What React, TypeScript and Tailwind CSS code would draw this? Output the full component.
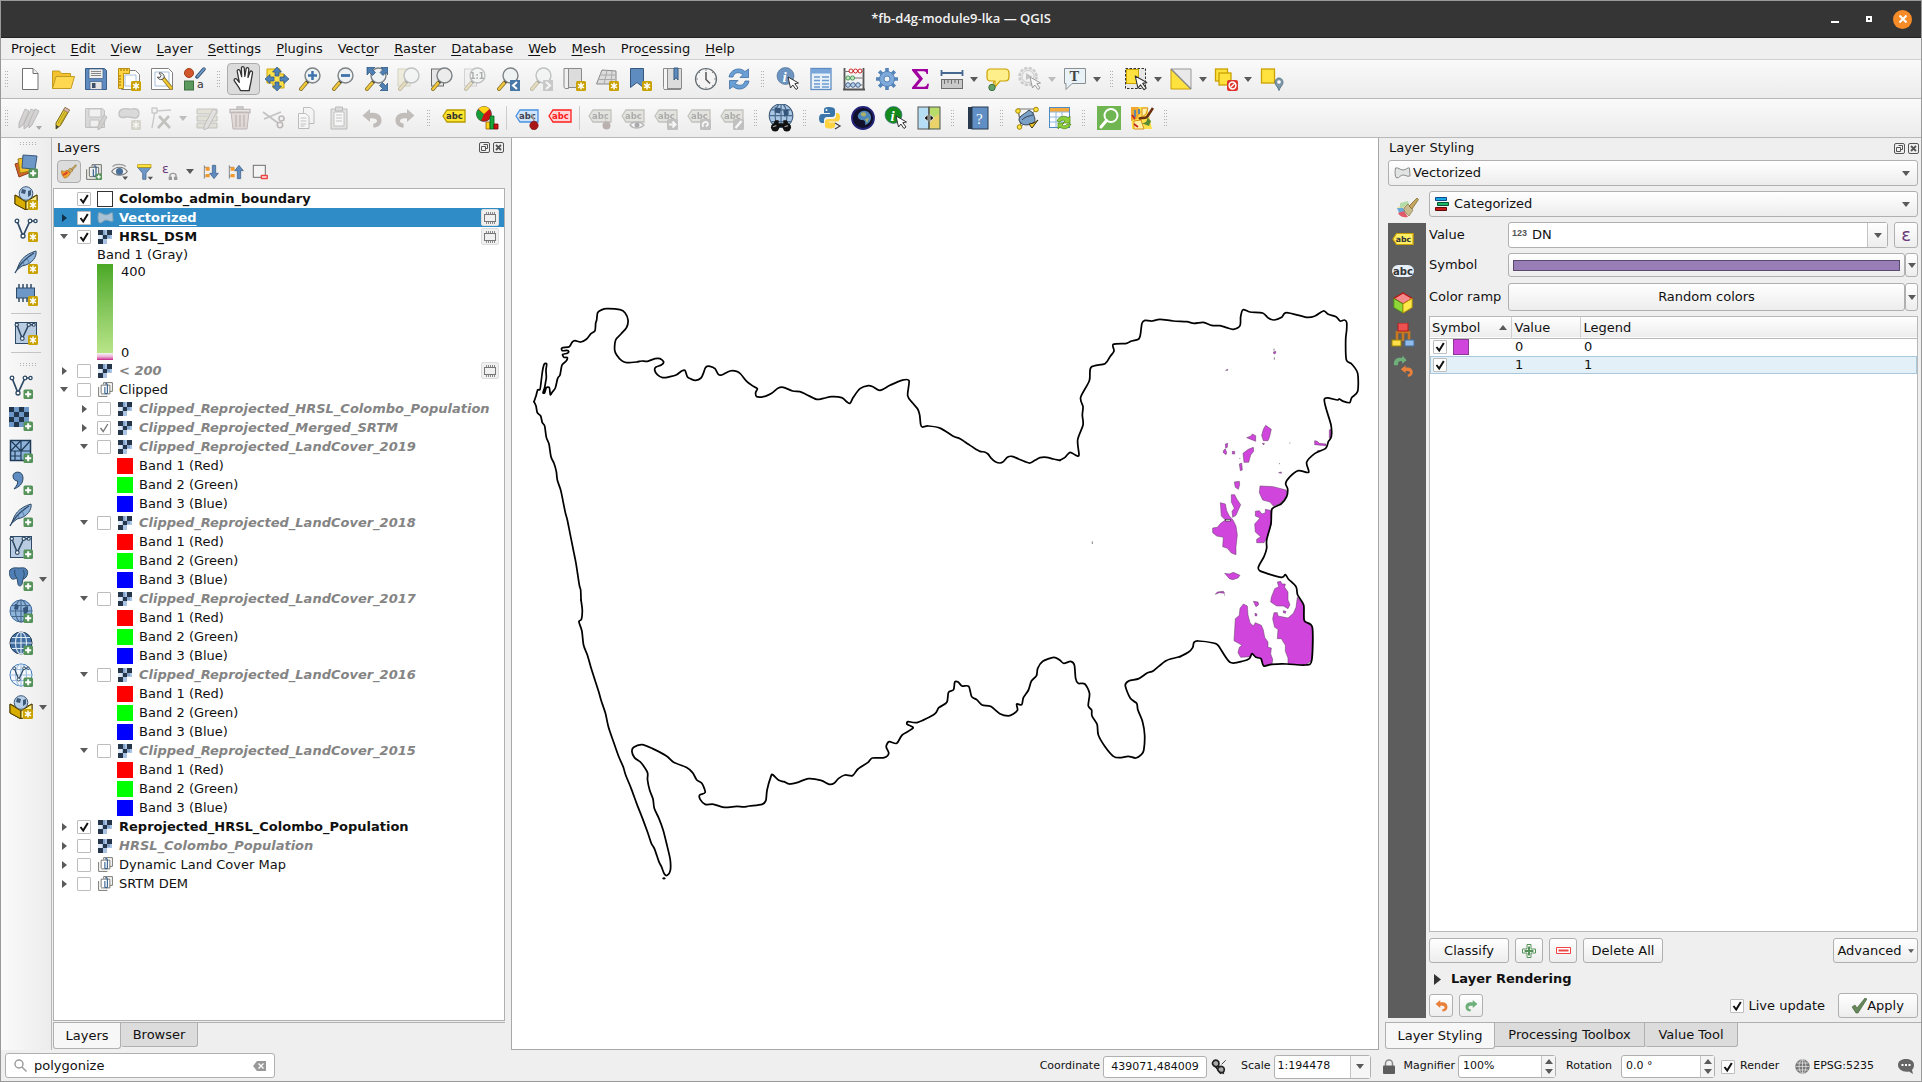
import React, { useState } from "react";

type Pt = number[];
type Kids = { children?: React.ReactNode };

/* Smooth curve through a flat list of x,y numbers. */
function curve(flat: number[]): string {
  const p: Pt[] = [];
  for (let i = 0; i < flat.length; i += 2) p.push([flat[i], flat[i + 1]]);
  let d = `M${p[0][0]} ${p[0][1]}`;
  for (let i = 0; i < p.length - 1; i++) {
    const a = p[i - 1] || p[i];
    const b = p[i];
    const c = p[i + 1];
    const e = p[i + 2] || c;
    const k = 7;
    d += `C${b[0] + (c[0] - a[0]) / k} ${b[1] + (c[1] - a[1]) / k} ${c[0] - (e[0] - b[0]) / k} ${c[1] - (e[1] - b[1]) / k} ${c[0]} ${c[1]}`;
  }
  return d;
}

/* ---------- icon pieces ---------- */

const I = ({ children, s = 24 }: Kids & { s?: number }) => (
  <svg width={s} height={s} viewBox="0 0 24 24" fill="none" aria-hidden="true" className="shrink-0">
    {children}
  </svg>
);

const NewBadge = () => (
  <g>
    <rect x="14" y="14" width="10" height="10" rx="1.5" fill="#c9a100" />
    <path d="M19 15.500v7M16 17.200l6 3.600M22 17.200l-6 3.600" stroke="#fff" strokeWidth="1.500" />
  </g>
);
const PlusBadge = () => (
  <g>
    <rect x="14.500" y="14.500" width="9.500" height="9.500" rx="1.500" fill="#56935a" />
    <path d="M19.200 16.200v6M16.200 19.200h6" stroke="#fff" strokeWidth="2" />
  </g>
);
const Cursor = () => <path d="M12 10l2.500 11 2.300-3 3.200 4.500 2-1.500-3.200-4.300 3.700-.7z" fill="#fff" stroke="#333" strokeWidth="1" strokeLinejoin="round" />;
const Lens = ({ fill = "#eef2f3" }: { fill?: string }) => (
  <g>
    <path d="M9.500 14.500L3 22" stroke="#8a7a30" strokeWidth="4" strokeLinecap="round" />
    <path d="M9 15L3 22" stroke="#f3c73c" strokeWidth="2.200" strokeLinecap="round" />
    <path d="M11 13l-2 2.500" stroke="#333" strokeWidth="3" />
    <circle cx="14.500" cy="8.500" r="7.500" fill={fill} stroke="#7d8285" strokeWidth="1.400" />
  </g>
);

const PageIcon = () => (
  <I>
    <path d="M4.500 1.500h10.500l5 5v16h-15.500z" fill="#fff" stroke="#707070" />
    <path d="M15 1.500v5h5" fill="#eee" stroke="#707070" />
  </I>
);
const FolderIcon = () => (
  <I>
    <path d="M1.500 21V4h7l2 2.500h9V21z" fill="#f4c22e" stroke="#c19a20" />
    <path d="M1.500 21.500L5 9.500h18.500L20 21.500z" fill="#ffd851" stroke="#c19a20" />
  </I>
);
const SaveIcon = () => (
  <I>
    <path d="M1.500 1.500h19l2 2v19h-21z" fill="#5f8cc0" stroke="#3c5f8a" />
    <rect x="5" y="2" width="14" height="9.500" fill="#eee" stroke="#3c5f8a" strokeWidth=".7" />
    <path d="M7 4.500h10M7 6.500h10M7 8.500h10" stroke="#888" />
    <rect x="6" y="14.500" width="12" height="8" fill="#e4e4e4" stroke="#3c5f8a" strokeWidth=".7" />
    <rect x="8" y="16" width="3.500" height="5" fill="#3c4f66" />
  </I>
);
const LayoutNewIcon = () => (
  <I>
    <path d="M4.500 3.500h14l4 4v15h-18z" fill="#fff" stroke="#808080" />
    <path d="M8 8h11v11H8z" stroke="#a9bfdc" />
    <path d="M1.500 1.500h11v5h-6v15h-5z" fill="#ffd23e" stroke="#b98f14" />
    <path d="M4 2v2M7 2v2M10 2v2M2 9h2M2 12h2M2 15h2M2 18h2" stroke="#8c6a08" />
    <NewBadge />
  </I>
);
const LayoutMgrIcon = () => (
  <I>
    <path d="M1.500 1.500h17l4 4v17h-21z" fill="#fff" stroke="#808080" />
    <path d="M5 5h14v14H5z" stroke="#a9bfdc" />
    <path d="M13 11l8 10" stroke="#8a7a30" strokeWidth="4" strokeLinecap="round" />
    <path d="M14 12.500l7 8.500" stroke="#f1c532" strokeWidth="2.400" strokeLinecap="round" />
    <path d="M9 6c3-1 6 2 5 5l-2 1.500c-2 .5-4-.5-4.500-2.500l2.500.5 1-2z" fill="#eee" stroke="#555" />
  </I>
);
const StyleMgrIcon = () => (
  <I>
    <circle cx="6" cy="6" r="4.500" fill="#d2562c" stroke="#a33c18" />
    <path d="M14 10l7-8" stroke="#3a5878" strokeWidth="3.500" strokeLinecap="round" />
    <path d="M14.500 9.500L21 2" stroke="#6f9ccb" strokeWidth="1.800" strokeLinecap="round" />
    <rect x="1.500" y="14" width="9" height="9" fill="#5a9a5e" stroke="#3e7042" />
    <text x="14" y="21" fontSize="11" fontFamily="DejaVu Sans" fill="#333">a</text>
  </I>
);
const HandIcon = () => (
  <I s={28}>
    <path d="M9 22c-1-3-4-6-5.500-9 0-1.500 1.600-1.800 2.500-.6L8 14.800 6.200 5.500c-.2-1.700 2-2.100 2.400-.5L10 10 9.800 2.600c0-1.700 2.300-1.700 2.400 0l.5 7.200 1.100-6.500c.3-1.600 2.500-1.300 2.300.4l-.7 7 1.700-4.700c.6-1.500 2.500-.9 2.200.7L18 14c-.4 3-1.200 4.500-1.500 8z" fill="#fff" stroke="#333" strokeWidth="1.100" strokeLinejoin="round" />
  </I>
);
const Arr4 = () => (
  <g fill="#4f83ba" stroke="#2c5176" strokeWidth=".7">
    <path d="M12 0l4.500 5H14v4h-4V5H7.500zM12 24l4.500-5H14v-4h-4v4H7.500zM0 12l5-4.500V10h4v4H5v2.500zM24 12l-5-4.500V10h-4v4h4v2.500z" />
  </g>
);
const PanSelIcon = () => (
  <I>
    <path d="M2 2h13v5h4v14H8v-5H2z" fill="#ffe24a" stroke="#c9a100" />
    <Arr4 />
  </I>
);
const ZoomInIcon = () => (
  <I>
    <Lens />
    <path d="M14.500 4v9M10 8.500h9" stroke="#3e73ad" strokeWidth="2.500" />
  </I>
);
const ZoomOutIcon = () => (
  <I>
    <Lens />
    <path d="M10 8.500h9" stroke="#3e73ad" strokeWidth="2.800" />
  </I>
);
const ZoomFullIcon = () => (
  <I>
    <Lens />
    <path d="M3 0h8L8.500 2.500l3 3-3 3-3-3L3 8zM24 0h-7l2 2.500-3 3 3 3 3-3L24 8zM24 24h-8l2.500-2.500-3-3 3-3 3 3L24 16z" fill="#4f7fb2" stroke="#2c5176" strokeWidth=".7" />
  </I>
);
const ZoomSelIcon = () => (
  <I>
    <rect x="1" y="2" width="12" height="17" fill="#ece39a" stroke="#b3ab70" />
    <Lens />
  </I>
);
const ZoomLayerIcon = () => (
  <I>
    <rect x="1.500" y="2" width="12" height="17" fill="#e6e6e6" stroke="#6a6a6a" />
    <Lens fill="#ececec" />
  </I>
);
const ZoomNativeIcon = () => (
  <I>
    <rect x="1.500" y="2" width="12" height="17" fill="#eee" stroke="#aaa" />
    <Lens />
    <text x="7" y="12" fontSize="8" fontWeight="bold" fontFamily="DejaVu Sans" fill="#555">1:1</text>
  </I>
);
const ZoomLastIcon = ({ next = false }: { next?: boolean }) => (
  <I>
    <Lens />
    <rect x="14" y="13" width="10" height="11" fill={next ? "#999" : "#4878a8"} />
    <path d={next ? "M17 15l4 3.500-4 3.500" : "M21 15l-4 3.500 4 3.500"} stroke="#fff" strokeWidth="2" />
  </I>
);
const NewMapIcon = () => (
  <I>
    <path d="M6.500 1.500h13v19h-13z" fill="#dcdcdc" stroke="#8a8a8a" />
    <path d="M2 1.500h4.500v20H4c-1.500 0-2-1-2-2z" fill="#f1f1f1" stroke="#8a8a8a" />
    <NewBadge />
  </I>
);
const New3dIcon = () => (
  <I>
    <path d="M7 3l14 1v13H1.500z" fill="#dcdcdc" stroke="#8a8a8a" />
    <path d="M5 8h16M3.500 12.500h17M12 3.500L9 17M17 4l-1 13" stroke="#aaa" />
    <NewBadge />
  </I>
);
const BookmarkNewIcon = () => (
  <I>
    <path d="M2.500 1.500h13v19l-6.500-5-6.500 5z" fill="#5f8cc0" stroke="#36587f" />
    <NewBadge />
  </I>
);
const BookmarksIcon = () => (
  <I>
    <path d="M6.500 1.500h14v20h-14z" fill="#dcdcdc" stroke="#8a8a8a" />
    <path d="M2.500 1.500h4v21H4c-1.500 0-1.500-1-1.500-2zM3 22.500h17" fill="#f5f5f5" stroke="#8a8a8a" />
    <path d="M13 1h4v12l-2-2.500-2 2.500z" fill="#5f8cc0" stroke="#36587f" />
  </I>
);
const ClockIcon = () => (
  <I>
    <circle cx="12" cy="12" r="10.500" fill="#f4f4f4" stroke="#606a70" strokeWidth="1.200" />
    <path d="M12 5v7.500l4 4" stroke="#555" strokeWidth="1.500" />
    <path d="M12 2v2M12 20v2M2 12h2M20 12h2M5 5l1 1M18 18l1 1M19 5l-1 1M5 19l1-1" stroke="#888" />
  </I>
);
const RefreshIcon = () => (
  <I>
    <path d="M2 10C3 3 12-1 18 4.500L21.500 2v8.500H13L16 7.500C11 4 7 6 6 10zM22 14c-1 7-10 11-16 5.500L2.500 22v-8.500H11L8 16.500c5 3.500 9 1.500 10-2.500z" fill="#6a9fd6" stroke="#3e6fa3" strokeWidth=".8" />
  </I>
);
const IdentifyIcon = ({ fill = "#6d94c0" }: { fill?: string }) => (
  <I>
    <circle cx="9.500" cy="9" r="8.500" fill={fill} stroke="#46688f" strokeWidth=".6" />
    <text x="6.500" y="15" fontSize="15" fontWeight="bold" fontStyle="italic" fontFamily="Liberation Serif" fill="#fff">i</text>
    <Cursor />
  </I>
);
const TableIcon = () => (
  <I>
    <rect x="2" y="1.500" width="20" height="21" fill="#e8f1fa" stroke="#5f8cc0" strokeWidth="1.300" />
    <rect x="2" y="2" width="20" height="4.500" fill="#79a6d8" />
    <path d="M5 10h6M13 10h7M5 13.500h6M13 13.500h7M5 17h6M13 17h7M5 20h6M13 20h7" stroke="#6b9bd0" strokeWidth="1.500" />
  </I>
);
const AbacusIcon = () => (
  <I>
    <path d="M2.500 1v22M21.500 1v22M1 22.500h22" stroke="#555" strokeWidth="1.800" />
    <path d="M2 4.500h20M2 11h20M2 18h20" stroke="#777" />
    <g strokeWidth="1" fill="#fff">
      <g stroke="#c22"><circle cx="9" cy="4" r="2" /><circle cx="13.500" cy="4" r="2" /><circle cx="18" cy="4" r="2" /></g>
      <g stroke="#4b9a55" fill="#bfe3c3"><circle cx="6" cy="11" r="2.100" /><circle cx="10.500" cy="11" r="2.100" /></g>
      <g stroke="#44658c" fill="#bcd3ee"><circle cx="6" cy="18" r="2.300" /><circle cx="11" cy="18" r="2.300" /><circle cx="16" cy="18" r="2.300" /></g>
    </g>
  </I>
);
const GearIcon = () => (
  <I>
    <g stroke="#5484b8" strokeWidth="3.600">
      <path d="M12 1v22M1 12h22M4.200 4.200l15.600 15.600M19.800 4.200L4.200 19.800" />
    </g>
    <circle cx="12" cy="12" r="7.500" fill="#7eaadb" stroke="#5484b8" />
    <circle cx="12" cy="12" r="3" fill="#f2f2f2" stroke="#5484b8" />
  </I>
);
const SigmaIcon = () => (
  <I>
    <path d="M4 2h16v5h-1.500c-.3-2-1-2.800-3-2.800H9l6 7.500-6.500 8H16c2 0 2.800-1 3.200-3H21L20 22H4v-1.500l7-8.500L4 3.500z" fill="#a000a0" />
  </I>
);
const MeasureIcon = () => (
  <I>
    <path d="M1 6h22M1.500 3v6M22.500 3v6" stroke="#46688f" strokeWidth="1.800" />
    <rect x="1.500" y="12.500" width="21" height="9" fill="#c9c9c9" stroke="#6d6d6d" />
    <path d="M4.500 13v4M8 13v3M11.500 13v4M15 13v3M18.500 13v4" stroke="#6d6d6d" />
  </I>
);
const TipIcon = () => (
  <I>
    <path d="M4 2h15c3 0 4 1 4 4v4c0 3-1 4-4 4h-5l-5 6v-6H5c-3 0-4-1-4-4V6c0-3 1-4 3-4z" fill="#ffef8a" stroke="#c9a100" strokeWidth="1.200" />
    <path d="M8 14l-2 6" stroke="#c9a100" />
    <circle cx="6" cy="20.500" r="3.200" fill="#65a169" stroke="#3e7042" />
  </I>
);
const ActionIcon = () => (
  <I>
    <circle cx="10" cy="9.500" r="8.500" fill="#ddd" stroke="#999" strokeWidth="2.500" strokeDasharray="3 1.500" />
    <circle cx="10" cy="9.500" r="6" fill="#eee" stroke="#999" />
    <path d="M8 6l6 3.500L8 13z" fill="#888" />
    <Cursor />
  </I>
);
const TextIcon = () => (
  <I>
    <path d="M1.500 1.500h21v15H9l-6 6v-6H1.500z" fill="#e8f2f7" stroke="#8a8f92" />
    <text x="6.500" y="14" fontSize="14.500" fontWeight="bold" fontFamily="Liberation Serif" fill="#444">T</text>
  </I>
);
const SelectIcon = () => (
  <I>
    <rect x="1.500" y="1.500" width="20" height="20" stroke="#333" strokeDasharray="2.500 1.500" fill="#e8e8e8" />
    <rect x="2.500" y="2.500" width="12" height="14" fill="#ffe23e" stroke="#c9a100" />
    <g transform="translate(-2 -2) scale(1.100)"><Cursor /></g>
  </I>
);
const DeselectIcon = () => (
  <I>
    <path d="M2 2h20v20z" fill="#e9e9e9" stroke="#999" />
    <path d="M2 2v20h20z" fill="#ffe23e" stroke="#c9a100" />
    <path d="M2 2l20 20" stroke="#888" strokeWidth="1.500" />
  </I>
);
const DeselectAllIcon = () => (
  <I>
    <rect x="1.500" y="2" width="12" height="12" fill="#ffe23e" stroke="#c9a100" strokeWidth="1.300" />
    <rect x="5" y="6" width="12" height="12" fill="#ffe23e" stroke="#c9a100" strokeWidth="1.300" />
    <rect x="13" y="13" width="11" height="11" rx="2" fill="#e0332c" />
    <circle cx="18.500" cy="18.500" r="3.400" fill="none" stroke="#fff" strokeWidth="1.500" />
    <path d="M16.200 20.800l4.600-4.600" stroke="#fff" strokeWidth="1.300" />
  </I>
);
const SelectLocIcon = () => (
  <I>
    <rect x="1.500" y="2" width="13" height="14" fill="#ffe23e" stroke="#c9a100" strokeWidth="1.300" />
    <path d="M15 15.500c0-6 8-6 8 0 0 3-3 4-4 8-1-4-4-5-4-8z" fill="#7d97a6" stroke="#5b7a8e" />
    <circle cx="19" cy="15" r="1.800" fill="#fff" />
  </I>
);

const PencilIcon = () => (
  <I>
    <path d="M5 17L14 1.500l4.500 2.500L9.500 19.500 5 23z" fill="#e6cc2e" stroke="#7a6a1c" />
    <path d="M7 17.500L15.500 3M9 18.500l8-14" stroke="#a08c20" strokeWidth=".8" />
    <path d="M5 19v4l3-2.500z" fill="#444" />
    <path d="M14 1.500l4.500 2.500-1.500 2.500-4.500-2.500z" fill="#d8b8a8" stroke="#8a6a5a" strokeWidth=".6" />
  </I>
);
const PencilsIcon = () => (
  <I>
    <path d="M1 17L7 3l4 2-6 14-4 3zM6 18l7-15 4 2-7 15-4 3z" fill="#b5a8aa" stroke="#7a7070" />
    <path d="M18 20h6l-3 4z" fill="#555" />
    <path d="M11 17l6-14 4 2-7 14-3 3z" fill="#b5a8aa" stroke="#7a7070" />
  </I>
);
const SaveEditsIcon = () => (
  <I>
    <path d="M1.500 2.500h17l2 2v17h-19z" fill="#bbb" stroke="#888" />
    <path d="M5 3h12v8H5zM6 14h9v7H6z" fill="#eee" stroke="#888" />
    <path d="M14 20l6-11 3 2-6 11-3 2z" fill="#b5a5a5" stroke="#8a7a7a" />
  </I>
);
const AddPolyIcon = () => (
  <I>
    <path d="M2 8c0-5 5-6 9-5s8-2 10 1 1 8-3 8-6-2-9-1-7 1-7-3z" fill="#b7bdb7" stroke="#888" strokeWidth="1.400" />
    <rect x="14" y="14" width="10" height="10" rx="1.500" fill="#bbb28a" />
    <path d="M19 15.500v7M16 17.200l6 3.600M22 17.200l-6 3.600" stroke="#fff" strokeWidth="1.300" />
  </I>
);
const VertexIcon = () => (
  <I>
    <path d="M3 22L6 5l16-1" stroke="#999" strokeWidth="1.400" />
    <rect x="3" y="2" width="5" height="5" fill="#eee" stroke="#777" />
    <path d="M10 10l11 12M20 10L9 22" stroke="#8a8a78" strokeWidth="2.600" />
  </I>
);
const ModifyIcon = () => (
  <I>
    <path d="M2 3h20v5H2zM2 10h20v5H2zM2 17h20v5H2z" fill="#cfcda6" stroke="#8b8b78" />
    <path d="M9 20l9-17 4 2-9 17-4 2z" fill="#d5c8c8" stroke="#8a8080" />
  </I>
);
const TrashIcon = () => (
  <I>
    <path d="M3 6h18l-2 17H5z" fill="#d9b8b4" stroke="#8b6f6d" />
    <path d="M2 3.500h20v3H2zM9 1h6v2H9zM8 9v12M12 9v12M16 9v12" stroke="#8b6f6d" strokeWidth="1.300" />
  </I>
);
const CutIcon = () => (
  <I>
    <path d="M2 6l15 11M3 13l17-7" stroke="#888" strokeWidth="1.800" />
    <circle cx="19" cy="19" r="2.700" stroke="#8a7070" strokeWidth="1.600" />
    <circle cx="20.500" cy="12.500" r="2.500" stroke="#8a7070" strokeWidth="1.600" />
  </I>
);
const CopyIcon = () => (
  <I>
    <path d="M9.500 1.500h7l3.500 3v13H9.500z" fill="#f4f4f4" stroke="#7a7a7a" />
    <path d="M4.500 7.500h7l3.500 3v12H4.500z" fill="#fff" stroke="#7a7a7a" />
    <path d="M6.500 12h6M6.500 15h6M6.500 18h6M6.500 20h4" stroke="#888" />
  </I>
);
const PasteIcon = () => (
  <I>
    <path d="M4 3h16v20H4z" fill="#cfd0c8" stroke="#7a7a7a" />
    <path d="M7 6h10v14H7z" fill="#fff" stroke="#888" />
    <path d="M8.500 1h7v4h-7z" fill="#bbb" stroke="#777" />
    <path d="M9 9h6M9 12h6M9 15h6" stroke="#888" />
  </I>
);
const UndoIcon = ({ fill = "#8f7a6e", flip = false, s = 24 }: { fill?: string; flip?: boolean; s?: number }) => (
  <I s={s}>
    <path transform={flip ? "matrix(-1 0 0 1 24 0)" : undefined} d="M2.500 9.500L10 3v4c7-1 12 2 11.500 8-.4 4-3.500 6.500-8 6.500-.5-2 0-3 0-4 2 0 3.500-1 3.500-2.500 0-2-3-3-7-2.500V16z" fill={fill} />
  </I>
);
const Tag = ({ fill, stroke, color }: { fill: string; stroke: string; color: string }) => (
  <g>
    <path d="M1 10l4-6h18v12H5z" fill={fill} stroke={stroke} strokeWidth="1.300" />
    <text x="4" y="13" fontSize="8.500" fontWeight="bold" fontFamily="DejaVu Sans" fill={color}>abc</text>
  </g>
);
const LabelIcon = () => <I><Tag fill="#ffe52e" stroke="#b59a00" color="#333" /></I>;
const DiagramIcon = () => (
  <I>
    <circle cx="9" cy="8" r="7.500" fill="#cc1414" stroke="#333" strokeWidth=".6" />
    <path d="M9 8L3 3.500A7.500 7.500 0 0 0 6 15z" fill="#159c38" />
    <path d="M9 8L3.500 3a7.500 7.500 0 0 1 11 0z" fill="#ffd617" />
    <path d="M11 16h4v7h-4z" fill="#ffd617" stroke="#a05a00" strokeWidth=".8" />
    <path d="M15 10h4v13h-4z" fill="#15a838" stroke="#0a5c1d" strokeWidth=".8" />
    <path d="M19 18h4v5h-4z" fill="#cc1414" stroke="#700" strokeWidth=".8" />
  </I>
);
const PinLabelIcon = () => (
  <I>
    <Tag fill="#cfe3fa" stroke="#4a90e2" color="#445" />
    <path d="M17 8l3 10" stroke="#999" strokeWidth="1.500" />
    <circle cx="19" cy="19.500" r="4.200" fill="#a81818" stroke="#701010" strokeWidth=".6" />
  </I>
);
const RedLabelIcon = () => <I><Tag fill="#ffd6d6" stroke="#ff1c1c" color="#ff1c1c" /></I>;
const DimLabelIcon = ({ kind }: { kind: "pin" | "eye" | "move" | "rotate" | "edit" }) => (
  <I>
    <Tag fill="#d3d0bd" stroke="#8a8774" color="#555" />
    {kind === "pin" && <g><path d="M16 8l2 9" stroke="#999" /><circle cx="18.500" cy="19.500" r="4" fill="#8a6060" /></g>}
    {kind === "eye" && <g><path d="M9 19c3-4 10-4 14 0-4 4-11 4-14 0z" fill="#fff" stroke="#777" strokeWidth="1.300" /><circle cx="16" cy="19" r="2.500" fill="#556" /></g>}
    {kind !== "pin" && kind !== "eye" && <rect x="13" y="13" width="11" height="11" rx="1.500" fill="#888" />}
    {kind === "move" && <path d="M15 18.500h6M18.500 15.500l3 3-3 3" stroke="#fff" strokeWidth="2" />}
    {kind === "rotate" && <path d="M16 21c-2-5 5-7 5-2.500l-2 2" stroke="#fff" strokeWidth="1.800" />}
    {kind === "edit" && <path d="M15.500 22l6-7" stroke="#fff" strokeWidth="2.400" />}
  </I>
);
const Globe = ({ fill = "#4f83ba", line = "#fff", edge = "#2c4a6b" }: { fill?: string; line?: string; edge?: string }) => (
  <g>
    <circle cx="12" cy="12" r="11" fill={fill} stroke={edge} />
    <path d="M12 1v22M1 12h22M3 6.500h18M3 17.500h18" stroke={line} strokeWidth="1.100" />
    <ellipse cx="12" cy="12" rx="5.500" ry="11" stroke={line} strokeWidth="1.100" />
  </g>
);
const MetaSearchIcon = () => (
  <I s={28}>
    <g transform="translate(1 -1) scale(.92)">
      <Globe fill="#a9c6e4" line="#4a6a8c" edge="#3c5878" />
      <path d="M6 4l6 1-1 5-5-1zM14 7l5-1v5l-4 2z" fill="#35557a" />
    </g>
    <path d="M4 20l3-6h3v2.500h4V14h3l3 6z" fill="#111" />
    <circle cx="7" cy="20" r="3.600" fill="#111" />
    <circle cx="17" cy="20" r="3.600" fill="#111" />
    <path d="M5 19.500l3-1M15 19.500l3-1" stroke="#999" />
  </I>
);
const PythonIcon = () => (
  <I>
    <path d="M11 1c-4 0-5 1.300-5 3v3h6v1H4c-2 0-3 2-3 4.500S2 17 4 17h2v-3c0-2 1.500-3 3-3h5c2 0 3-1 3-3V4c0-2-2-3-6-3z" fill="#3b76ab" />
    <path d="M12 22.500c4 0 5-1.300 5-3v-3h-6v-1h8c2 0 3-2 3-4.500S21 7 19 7h-1v3c0 2-1.500 3-3 3h-5c-2 0-3 1-3 3v3.500c0 2 1 3 5 3z" fill="#ffd23f" />
    <circle cx="8.500" cy="4" r="1" fill="#fff" />
    <path d="M17 17l5 3-5 3" stroke="#444" strokeWidth="1.300" fill="#eee" />
  </I>
);
const EarthIcon = () => (
  <I>
    <circle cx="12" cy="12" r="11" fill="#10102a" stroke="#24247a" strokeWidth="1.800" />
    <path d="M7 9c2-5 9-6 12-1s-1 10-5 11c1-4-1-5-3-5s-5-2-4-5z" fill="#4d86b8" />
    <path d="M10 7c3-2 6 0 5 2s-3 2-5 0zM14 13l4-1-2 5z" fill="#a8b06a" />
  </I>
);
const SwipeIcon = () => (
  <I>
    <rect x="1" y="1" width="11" height="22" fill="#b6dff5" stroke="#555" />
    <rect x="12" y="1" width="11" height="22" fill="#b8dc6a" stroke="#555" />
    <path d="M13 14l9-6v14h-9z" fill="#e9d36a" />
    <path d="M11 8.500L7 12l4 3.500zM13 8.500l4 3.500-4 3.500z" fill="#111" stroke="#fff" strokeWidth=".8" />
    <path d="M12 1v22" stroke="#555" />
  </I>
);
const HelpIcon = () => (
  <I>
    <path d="M2 1h5v22H2z" fill="#28394c" />
    <rect x="6" y="1" width="16" height="22" fill="#5f8fc4" stroke="#28394c" />
    <text x="10" y="18" fontSize="15" fontFamily="Liberation Serif" fill="#fff">?</text>
  </I>
);
const TopologyIcon = () => (
  <I>
    <path d="M3 3l18 0L6 21zM3 3l3 18" stroke="#777" />
    <path d="M5 11c3-3 6-4 9-7l4 3c2 5 3 8 0 10s-9 3-12 0-2-4-1-6z" fill="#7aa0c6" stroke="#345" />
    <path d="M7 14c4-4 8-4 11-5" stroke="#345" />
    <g fill="#ffe23e" stroke="#a08600"><circle cx="3" cy="5" r="2.300" /><circle cx="21" cy="3.500" r="2.300" /><circle cx="4.500" cy="21" r="2.300" /></g>
    <path d="M14 18l3 4 6-8-4 3z" stroke="#3a3010" fill="#f2cc20" />
  </I>
);
const TableSyncIcon = () => (
  <I>
    <rect x="1.500" y="1.500" width="20" height="20" fill="#fff" stroke="#4f8ac0" />
    <path d="M2 2h19v4H2z" fill="#f4a93c" />
    <path d="M2 6h19M2 11h19M2 16h19M8 6v15M14 6v15" stroke="#8fb8dc" />
    <path d="M9 15c2-5 8-6 11-3l2-2v7h-7l2-2c-2-1.500-4-1-5 1zM23 18c-2 5-8 6-11 3l-2 2v-6h6l-2 2c2 1.500 4 1 5-1z" fill="#8ccf3a" stroke="#4e8a16" strokeWidth=".7" />
  </I>
);
const GreenSearchIcon = () => (
  <I>
    <rect x="0" y="0" width="24" height="24" fill="#6fb551" />
    <circle cx="14" cy="9.500" r="6.500" stroke="#fff" strokeWidth="2" />
    <path d="M9.500 14.500L4 21" stroke="#fff" strokeWidth="3" strokeLinecap="round" />
  </I>
);
const ColorMapIcon = () => (
  <I>
    <path d="M1 1h16l2 8 3 14H2z" fill="#ffe04a" />
    <path d="M1 1h7l3 5-4 7-6 2z" fill="#f0a830" />
    <path d="M12 2h6l-2 6-4 3zM4 15l7-1 3 9H4z" fill="#fff2a8" stroke="#d89018" />
    <path d="M5 4v7M9 3v5" stroke="#3f7fc0" strokeWidth="1.600" />
    <path d="M2 9l3 4M4 18l4 3" stroke="#c42a2a" strokeWidth="2" />
    <path d="M9 13c2-2 5 0 8-2l6-9" stroke="#6b3010" strokeWidth="2.600" />
    <path d="M11 17c5 1 7-3 6-6l4 4-2 5z" fill="#5b8a34" />
  </I>
);

/* ---------- left tool strip ---------- */
const Vee = ({ c = "#2e4a66" }: { c?: string }) => (
  <g stroke={c} strokeWidth="1.300" fill="#fff">
    <path d="M3 3l6 15L16 3h5" fill="none" strokeWidth="1.700" />
    <circle cx="3" cy="3" r="1.800" /><circle cx="9" cy="18" r="2" /><circle cx="16" cy="3" r="1.800" /><circle cx="21.500" cy="3" r="1.600" />
  </g>
);
const Feather = () => (
  <g>
    <path d="M3 20C5 12 9 5 22 1c1 5-3 13-14 15z" fill="#8fb4dc" stroke="#2e4a66" />
    <path d="M1 23C5 15 12 8 20 3" stroke="#2e4a66" strokeWidth="1.300" />
    <path d="M9 11l1 4M13 7.500l2 5" stroke="#4a6f98" strokeWidth=".8" />
  </g>
);
const Checker = () => (
  <I>
    <path d="M0 0h20v20H0z" fill="#6d97c7" />
    <path d="M0 0h5v5H0zM10 0h5v5h-5zM5 5h5v5H5zM15 5h5v5h-5zM0 10h5v5H0zM10 10h5v5h-5zM5 15h5v5H5z" fill="#22364c" />
    <PlusBadge />
  </I>
);
const BoxGlobe = () => (
  <g>
    <path d="M1 9l11 5 11-5v9l-11 6-11-6z" fill="#ffe96a" stroke="#6b5500" />
    <circle cx="12" cy="7.500" r="6.800" fill="#b7cfe8" stroke="#3c5878" />
    <path d="M8 3l4 1-1 4-4-1zM14 5l3-1v5l-3 2z" fill="#3c5878" />
    <path d="M1 9l11 7v8L1 18z" fill="#d9ac00" stroke="#4a3b00" />
    <path d="M23 9l-11 7v8l11-6z" fill="#fff08a" stroke="#4a3b00" />
  </g>
);
const LayersAddIcon = () => (
  <I>
    <path d="M1 10l9-3 5 12-10 4z" fill="#d2622c" stroke="#8f3f18" />
    <path d="M4 5l11-2 2 14-11 2z" fill="#f2c228" stroke="#9c7c10" />
    <path d="M9 1l14 1-2 13-13-1z" fill="#6d97c7" stroke="#3c5878" />
    <PlusBadge />
  </I>
);
const ChipNewIcon = () => (
  <I>
    <path d="M5 2v18M9 2v18M13 2v18M17 2v18" stroke="#2e4a66" strokeWidth="1.500" />
    <rect x="2.500" y="6" width="18" height="10" fill="#6d97c7" stroke="#2e4a66" />
    <NewBadge />
  </I>
);
const BoxedVee = ({ badge }: { badge: React.ReactNode }) => (
  <I>
    <rect x="1.500" y="1.500" width="21" height="21" fill="#b8cbe0" stroke="#2e4a66" />
    <g transform="translate(0 1) scale(.92)"><Vee /></g>
    {badge}
  </I>
);
const MeshAddIcon = () => (
  <I>
    <rect x="1.500" y="1.500" width="20" height="20" fill="#8fb4dc" stroke="#1f3a56" strokeWidth="1.500" />
    <path d="M1.500 12h20M12 1.500v20M1.500 1.500L12 12M12 1.500L1.500 12M12 12l9.500-10.500M6 12v9M1.500 17H12" stroke="#1f3a56" strokeWidth="1.200" />
    <PlusBadge />
  </I>
);
const CommaIcon = () => (
  <I>
    <path d="M4 5c0-5 10-6 10 2 0 6-4 9-9 11 3-4 4-5 3.500-8C6 10 4 8 4 5z" fill="#5f8cc0" stroke="#2e4a66" />
    <PlusBadge />
  </I>
);
const ElephantIcon = () => (
  <I>
    <path d="M1 3c3-3 6-2 9-2s6-1 8 2-1 9-4 9l-1 5c-1 3-4 2-4 0l-1-6c-2 1-5 2-6 0S-1 6 1 3z" fill="#4f7fb5" stroke="#2e4a66" />
    <path d="M6 3c-1 3 0 6 2 8M14 3c2 3 1 6 0 9" stroke="#2e4a66" />
    <PlusBadge />
  </I>
);
const GlobeAddIcon = ({ k }: { k: 0 | 1 | 2 }) => (
  <I>
    {k === 0 && <Globe fill="#8fb4dc" line="#48688c" edge="#3c6a9c" />}
    {k === 1 && <Globe fill="#3f6d9f" line="#dfe9f3" edge="#1c3550" />}
    {k === 2 && <g><Globe fill="#f6f9fc" line="#9dbde0" edge="#3c78b8" /><g transform="translate(3 3) scale(.75)"><Vee /></g></g>}
    {k === 0 && <path d="M6 5l4 1-1 5-4-1zM14 9l5-2v6l-4 3z" fill="#35557a" />}
    <PlusBadge />
  </I>
);

/* ---------- small panel icons ---------- */
const RasterIcon = () => (
  <svg width="14" height="14" viewBox="0 0 14 14" className="shrink-0" shapeRendering="crispEdges" aria-hidden="true">
    <path d="M0 0h14v9H9v5H0z" fill="#abc4e4" />
    <path d="M0 5h4v4H0z" fill="#dfe9f5" />
    <path d="M0 0h5v5H0zM9 0h5v5H9zM5 5h4v4H5zM0 9h5v5H0z" fill="#26364a" />
    <path d="M5 0h2v5H5zM9 5h3v3H9z" fill="#86a5cc" />
  </svg>
);
const GroupIcon = () => (
  <I s={15}>
    <path d="M1 8v15h14M5 18V5h14v14H5M9 4V1h14v14h-4" stroke="#6d6f66" strokeWidth="1.500" />
    <path d="M11 8v9c0 2 4 2 4 0V5c0-3-3-3-3-1" stroke="#36618f" strokeWidth="1.800" />
  </I>
);
const PolyIcon = ({ light = false }: { light?: boolean }) => (
  <svg width="17" height="14" viewBox="0 0 17 14" className="shrink-0" aria-hidden="true">
    <path d="M1.500 2C4 1 6 4 9 4s5-3 6.500-2l.5 8c-3 1-4-1-7-1s-3 3-6.500 3C.5 10 1 5 1.500 2z" fill={light ? "#e2e4e4" : "#a9c3d4"} stroke={light ? "#8a8c8c" : "#89a6b8"} />
  </svg>
);
const ChipIcon = () => (
  <span className="flex h-[17px] w-[18px] shrink-0 items-center justify-center rounded-xs border border-[#dcdcdc] bg-[#f0f0f0]">
    <svg width="14" height="12" viewBox="0 0 14 12" aria-hidden="true">
      <path d="M3.500 0v12M5.500 0v12M7.500 0v12M9.500 0v12M11.500 0v12" stroke="#8a8a8a" />
      <rect x="1.500" y="2.500" width="11" height="7" fill="#f0f0f0" stroke="#777" />
    </svg>
  </span>
);
const BrushIcon = () => (
  <I s={16}>
    <path d="M1 10c4 2 5 1 8-1l5 5c-2 4-5 7-9 7-2-3-5-6-4-11z" fill="#f0a02c" stroke="#b06a10" />
    <path d="M3 16c3 0 5-2 7-4" stroke="#d8452c" strokeWidth="3" />
    <path d="M11 9l3 4 4-3-4-4zM16 7l6-6 1 2-6 6z" fill="#d0b060" stroke="#8a6a28" />
  </I>
);
const StyleBrushIcon = () => (
  <I>
    <path d="M2 13l9-6 3 3-8 8z" fill="#eee5a0" />
    <path d="M5 8l8-2 1 3-9 5z" fill="#b5dca8" />
    <path d="M2 13l6 0 3 4-6 3z" fill="#6aa8d8" />
    <path d="M3 18l6-2 4 6c-4 1-8 0-10-4z" fill="#e05a6a" />
    <path d="M9 13l4-4 5 6-4 6c-2-2-5-4-5-8z" fill="#c9bb8c" stroke="#8a7a50" strokeWidth=".7" />
    <path d="M14 11l8-8 1.500 1.500L17 14z" fill="#c4a55e" stroke="#7a602c" strokeWidth=".7" />
  </I>
);

const Caret = ({ up = false, dim = false }: { up?: boolean; dim?: boolean }) => (
  <svg width="8" height="5" viewBox="0 0 8 5" aria-hidden="true" className="shrink-0">
    <path d={up ? "M0 5h8L4 0z" : "M0 0h8L4 5z"} fill={dim ? "#bdbdbd" : "#5a5a5a"} />
  </svg>
);

/* ---------- toolbar parts ---------- */
const gripRows = [0, 1, 2, 3, 4, 5];
const Grip = ({ flat = false }: { flat?: boolean }) => (
  <svg width={flat ? 17 : 4} height={flat ? 4 : 17} aria-hidden="true" shapeRendering="crispEdges" className="shrink-0">
    {gripRows.map((i) => (
      <g key={i} fill="#b2b2b2">
        <rect x={flat ? i * 3 : 0} y={flat ? 0 : i * 3} width="1" height="1" />
        <rect x={flat ? i * 3 : 2} y={flat ? 2 : i * 3} width="1" height="1" />
      </g>
    ))}
  </svg>
);
const Handle = ({ first = false }: { first?: boolean }) => (
  <div className={`flex shrink-0 items-center justify-center ${first ? "w-3" : "w-4"}`}><Grip /></div>
);
const Sep = () => <div className="mx-[3px] h-6 w-px shrink-0 self-center bg-[#cdcdcd]" />;
function TB({ children, n, dd, on, dim }: Kids & { n: string; dd?: boolean; on?: boolean; dim?: boolean }) {
  return (
    <button
      type="button"
      aria-label={n}
      className={`flex h-8 shrink-0 items-center self-center rounded-sm ${dd ? "w-[45px] pl-1" : "w-[33px] justify-center"} ${on ? "border border-[#adadad] bg-[#dcdcdc]" : ""}`}
    >
      <span className={dim ? "opacity-45 grayscale-50" : ""}>{children}</span>
      {dd && <span className="ml-[6px]"><Caret dim={dim} /></span>}
    </button>
  );
}
const Bar = ({ children }: Kids) => (
  <div className="flex h-[39px] shrink-0 border-b border-[#b8b8b8] bg-linear-to-b from-[#fafafa] to-[#ececec]">{children}</div>
);
function SideB({ children, n, dd, wide }: Kids & { n: string; dd?: boolean; wide?: boolean }) {
  return (
    <button type="button" aria-label={n} className={`flex h-8 shrink-0 items-center ${wide ? "pl-2" : "justify-center"}`}>
      {children}
      {dd && <span className="ml-1.5"><Caret /></span>}
    </button>
  );
}
const HSep = () => <div className="mx-2.5 my-[3px] h-px shrink-0 bg-[#c4c4c4]" />;
const HHandle = () => <div className="flex h-3 shrink-0 items-center justify-center pl-1"><Grip flat /></div>;

/* ---------- form parts ---------- */
function Check({ on = false, dim = false, label, children }: Kids & { on?: boolean; dim?: boolean; label?: string }) {
  const [v, setV] = useState(on);
  return (
    <label className="flex shrink-0 items-center gap-[5px]">
      <span className="relative flex size-[14px]">
        <input
          type="checkbox"
          aria-label={label}
          checked={v}
          onChange={() => setV(!v)}
          className="size-[14px] appearance-none rounded-[1px] border border-[#bdbdbd] bg-white"
        />
        {v && (
          <svg viewBox="0 0 14 14" className="pointer-events-none absolute inset-0" aria-hidden="true">
            <path d="M3.500 7l2.700 3.500L10.800 3" fill="none" stroke={dim ? "#777" : "#111"} strokeWidth={dim ? 1.4 : 2} />
          </svg>
        )}
      </span>
      {children}
    </label>
  );
}
const btn = "flex items-center justify-center rounded-[3px] border border-[#b0b0b0] bg-linear-to-b from-white to-[#ededed]";
const dd12 = "flex w-[13px] items-center justify-center rounded-[3px] border border-[#b0b0b0] bg-linear-to-b from-white to-[#ededed]";

function Combo({ icon, text, label }: { icon: React.ReactNode; text: string; label: string }) {
  return (
    <div className="relative flex h-[26px] items-center">
      <select aria-label={label} className="h-full w-full appearance-none rounded-[3px] border border-[#b0b0b0] bg-linear-to-b from-white to-[#ededed] pl-6">
        <option>{text}</option>
      </select>
      <span className="pointer-events-none absolute left-1.5">{icon}</span>
      <span className="pointer-events-none absolute right-2 flex"><Caret /></span>
    </div>
  );
}

const DockButtons = () => (
  <div className="flex gap-[3px]">
    <button type="button" aria-label="Float panel" className="flex size-[11px] items-center justify-center rounded-xs border border-[#555]">
      <svg width="7" height="7" viewBox="0 0 7 7" fill="none" stroke="#555"><path d="M2.500.5h4v4h-2M.5 2.500h4v4h-4z" /></svg>
    </button>
    <button type="button" aria-label="Close panel" className="flex size-[11px] items-center justify-center rounded-xs border border-[#555]">
      <svg width="7" height="7" viewBox="0 0 7 7" stroke="#555" strokeWidth="1.800"><path d="M1 1l5 5M6 1L1 6" /></svg>
    </button>
  </div>
);

/* ---------- layer tree ---------- */
type Row = {
  t: string;
  d: 0 | 1;
  arrow?: "r" | "d";
  on?: boolean;
  dimCheck?: boolean;
  icon: "box" | "poly" | "raster" | "group";
  style: "bold" | "gray" | "plain";
  sel?: boolean;
  chip?: boolean;
};

const iconFor = (k: Row["icon"]) =>
  k === "box" ? <span className="size-4 border border-[#333] bg-white" /> : k === "poly" ? <PolyIcon /> : k === "raster" ? <RasterIcon /> : <GroupIcon />;

function TreeRow({ r }: { r: Row }) {
  return (
    <li className={`flex h-[19px] items-center pr-[5px] ${r.sel ? "bg-[#308cc6] text-white" : ""} ${r.d ? "pl-[26px]" : "pl-[6px]"}`}>
      <span className="flex w-[17px] shrink-0">
        {r.arrow === "d" && <Caret />}
        {r.arrow === "r" && (
          <svg width="5" height="8" viewBox="0 0 5 8" className="ml-0.5" aria-hidden="true"><path d="M0 0v8l5-4z" fill={r.sel ? "#10324a" : "#5a5a5a"} /></svg>
        )}
      </span>
      <Check on={r.on} dim={r.dimCheck} label={r.t} />
      <span className="ml-[5px] flex w-[18px] shrink-0 justify-center">{iconFor(r.icon)}</span>
      <span
        className={`ml-[5px] whitespace-nowrap ${r.style === "bold" ? "font-bold" : ""} ${r.style === "gray" ? "font-bold text-[#848484] italic" : ""} ${r.sel ? "underline underline-offset-3" : ""}`}
      >
        {r.t}
      </span>
      {r.chip && <span className="ml-auto"><ChipIcon /></span>}
    </li>
  );
}

const bands = [
  { t: "Band 1 (Red)", c: "bg-[#ff0000]" },
  { t: "Band 2 (Green)", c: "bg-[#00ff00]" },
  { t: "Band 3 (Blue)", c: "bg-[#0000ff]" },
];
const years = [2019, 2018, 2017, 2016, 2015];

function LayerTree() {
  return (
    <ul className="min-h-0 flex-1 overflow-hidden border border-[#b0b0b0] bg-white">
      <TreeRow r={{ t: "Colombo_admin_boundary", d: 0, on: true, icon: "box", style: "bold" }} />
      <TreeRow r={{ t: "Vectorized", d: 0, arrow: "r", on: true, icon: "poly", style: "bold", sel: true, chip: true }} />
      <TreeRow r={{ t: "HRSL_DSM", d: 0, arrow: "d", on: true, icon: "raster", style: "bold", chip: true }} />
      <li className="pl-[43px]">
        <div className="h-[18px] leading-[17px]">Band 1 (Gray)</div>
        <div className="flex h-[97px] gap-2">
          <div className="h-24 w-4 bg-linear-to-b from-[#4aa824] from-0% via-[#b8e488] via-92% to-[#b8e488] to-92%">
            <div className="h-[89px]" />
            <div className="h-[7px] bg-linear-to-b from-[#f4f4f4] via-[#ecb4d8] to-[#c4148c]" />
          </div>
          <div className="flex flex-col justify-between">
            <span className="leading-4">400</span>
            <span className="leading-4">0</span>
          </div>
        </div>
      </li>
      <TreeRow r={{ t: "< 200", d: 0, arrow: "r", icon: "raster", style: "gray", chip: true }} />
      <TreeRow r={{ t: "Clipped", d: 0, arrow: "d", icon: "group", style: "plain" }} />
      <TreeRow r={{ t: "Clipped_Reprojected_HRSL_Colombo_Population", d: 1, arrow: "r", icon: "raster", style: "gray" }} />
      <TreeRow r={{ t: "Clipped_Reprojected_Merged_SRTM", d: 1, arrow: "r", on: true, dimCheck: true, icon: "raster", style: "gray" }} />
      {years.map((y) => (
        <React.Fragment key={y}>
          <TreeRow r={{ t: `Clipped_Reprojected_LandCover_${y}`, d: 1, arrow: "d", icon: "raster", style: "gray" }} />
          {bands.map((b) => (
            <li key={b.t} className="flex h-[19px] items-center gap-[6px] pl-[63px]">
              <span className={`size-4 ${b.c}`} />
              {b.t}
            </li>
          ))}
        </React.Fragment>
      ))}
      <TreeRow r={{ t: "Reprojected_HRSL_Colombo_Population", d: 0, arrow: "r", on: true, icon: "raster", style: "bold" }} />
      <TreeRow r={{ t: "HRSL_Colombo_Population", d: 0, arrow: "r", icon: "raster", style: "gray" }} />
      <TreeRow r={{ t: "Dynamic Land Cover Map", d: 0, arrow: "r", icon: "group", style: "plain" }} />
      <TreeRow r={{ t: "SRTM DEM", d: 0, arrow: "r", icon: "group", style: "plain" }} />
    </ul>
  );
}

function LayersDock() {
  return (
    <section className="flex w-[459px] shrink-0 flex-col pr-[6px] pl-px">
      <header className="flex h-[21px] items-center justify-between pr-px pb-0.5 pl-1">
        <h2>Layers</h2>
        <DockButtons />
      </header>
      <div className="flex h-[29px] items-center gap-[9px] pb-1 pl-1">
        <button type="button" aria-label="Layer styling panel" className="flex h-[23px] w-6 items-center justify-center rounded-sm border border-[#adadad] bg-[#dcdcdc]"><BrushIcon /></button>
        <button type="button" aria-label="Add group" className="-ml-1"><I s={16}><path d="M1 8v15h14M5 18V5h14v14H5M9 4V1h14v14h-4" stroke="#6d6f66" strokeWidth="1.500" /><path d="M11 8v9c0 2 4 2 4 0V5c0-3-3-3-3-1" stroke="#36618f" strokeWidth="1.800" /><PlusBadge /></I></button>
        <button type="button" aria-label="Map themes"><I s={17}><path d="M1 12c5-8 17-8 22 0-5 7-17 7-22 0z" fill="#f2f2f2" stroke="#777" strokeWidth="1.600" /><circle cx="12" cy="12" r="5" fill="#4a6f98" /><path d="M2 5c4-4 14-4 19 0" stroke="#999" strokeWidth="1.600" /><path d="M16 19h8l-4 5z" fill="#555" /></I></button>
        <button type="button" aria-label="Filter legend"><I s={16}><path d="M1 5h20l-7.500 9v9h-5v-9z" fill="#6d97c7" stroke="#36587f" /><rect x="1" y="1" width="20" height="4" fill="#ffe23e" stroke="#b09000" /><path d="M16 19h8l-4 5z" fill="#555" /></I></button>
        <button type="button" aria-label="Filter by expression" className="flex items-center gap-2"><I s={16}><text x="0" y="14" fontSize="19" fontFamily="DejaVu Sans" fill="#6b3a7a">ε</text><path d="M12 23v-6c0-4 9-4 9 0v6M11 20h3v4h-3zM19 20h3v4h-3z" stroke="#999" strokeWidth="2" /></I><Caret /></button>
        <button type="button" aria-label="Expand all"><I s={16}><path d="M2 2v20M2 5h7M2 18h7" stroke="#777" strokeWidth="1.300" /><path d="M4 5h6v5H4zM4 15h6v5H4z" fill="#f29a2c" /><path d="M14 2h5v12h4l-6.500 8L10 14h4z" fill="#5f8cc0" stroke="#36587f" /></I></button>
        <button type="button" aria-label="Collapse all"><I s={16}><path d="M2 2v20M2 5h7M2 18h7" stroke="#777" strokeWidth="1.300" /><path d="M4 5h6v5H4zM4 15h6v5H4z" fill="#f29a2c" /><path d="M14 22h5V10h4l-6.500-8L10 10h4z" fill="#5f8cc0" stroke="#36587f" /></I></button>
        <button type="button" aria-label="Remove layer" className="-ml-px"><I s={16}><rect x="2" y="2" width="18" height="18" fill="#f4f4f4" stroke="#777" strokeWidth="1.600" /><rect x="13" y="16" width="11" height="7" rx="1.500" fill="#ef4444" /><path d="M15 19.500h7" stroke="#fff" strokeWidth="2" /></I></button>
      </div>
      <LayerTree />
      <nav className="mt-px flex h-[28px] items-start border-t border-[#b0b0b0]">
        <button type="button" className="h-[26px] w-[68px] rounded-b-[3px] border border-t-0 border-[#b0b0b0] bg-[#f7f7f7]">Layers</button>
        <button type="button" className="h-[24px] w-[77px] rounded-b-[3px] border border-t-0 border-l-0 border-[#b0b0b0] bg-[#dcdcdc]">Browser</button>
      </nav>
    </section>
  );
}

/* ---------- map ---------- */
const coastNorth = [42,335,48,318,53,300,60,298,64,270,68,240,73,222,80,222,78,240,79,262,77,275,74,292,69,308,74,308,79,293,88,293,91,314,97,306,106,294,113,265,120,255,126,225,138,214,142,203,132,202,128,193,142,190,146,184,140,181,127,182,126,174,148,170,156,157,165,152,182,156,200,147,213,131,225,122,227,100,230,90,233,68,244,60,260,56,300,59,315,68,324,90,320,112,303,132,287,150,284,180,290,195,305,212,320,218,350,216,365,213,382,214,405,206,420,206,431,216,424,225,408,231,404,240,412,254,428,263,450,260,470,254,485,243,495,241,502,260,513,267,527,271,543,264,550,250,557,232,570,229,585,236,595,253,605,255,630,243,650,244,662,252,680,274,700,289,712,296,707,308,710,320,735,319,755,310,775,294,790,292,818,303,840,305,860,314,890,328,910,325,935,320,965,323,980,335,990,340,1000,322,1020,296,1045,287,1060,291,1080,301,1110,286,1145,271,1167,272,1163,317,1178,339,1193,357,1199,375,1202,403,1207,411,1225,408,1262,415,1300,439,1320,446,1344,462,1362,474,1380,484,1394,486,1404,492,1414,505,1426,515,1440,519,1450,515,1462,502,1476,499,1496,507,1515,515,1530,519,1545,511,1560,503,1580,502,1600,507,1620,511];
const coastWest = [42,335,48,348,52,368,62,378,67,398,74,408,79,442,87,462,93,500,102,520,109,545,112,570,122,600,128,628,136,668,142,690,150,730,160,780,168,820,178,885,182,900,183,930];
const south = [145,0,148,30,146,58,140,65,147,93,151,135,160,165,168,200,178,240,187,275,193,302,203,340,210,380,222,425,234,468,245,500,251,525,264,565,277,610,291,655,304,700,312,730,320,748,330,785,336,800,343,822,350,826,357,812,357,780,350,740,340,690,330,655,319,625,316,597,308,570,303,540,303,518,292,495,285,485,272,473,266,455,270,442,290,434,315,446,348,468,365,487,395,502,410,518,420,540,432,550,440,577,427,585,428,598,440,613,460,613,485,622,515,619,530,621,545,618,575,613,584,602,587,570,596,530,600,524,615,541,627,545,640,552,660,547,685,536,715,541,735,553,747,549,757,535,772,525,790,527,803,507,826,488,837,474,865,473,876,460,870,440,877,425,895,430,908,405,934,384,920,373,922,365,945,367,985,342,995,323,1014,307,1018,277,1030,269,1033,246,1041,246,1050,258,1066,259,1073,290,1085,299,1098,315,1118,319,1140,341,1160,348,1172,342,1182,330,1180,312,1192,314,1196,293,1208,270,1215,243,1227,227,1230,205,1242,184,1268,172,1282,180,1292,190,1308,184,1317,195,1320,235,1326,250,1342,252,1353,280,1350,317,1358,330,1359,348,1371,373,1374,405,1390,440,1410,469,1425,473,1445,469,1463,474,1476,464,1482,450,1484,405,1479,365,1468,330,1465,310,1450,295,1438,257,1446,243,1470,236,1490,219,1505,212,1535,182,1568,170];
const east = [360,1100,385,1087,398,1073,402,1057,415,1053,460,1059,475,1067,510,1117,550,1113,568,1106,576,1091,588,1102,603,1106,611,1128,635,1123,680,1122,735,1125,755,1112,757,1012,733,992,731,945,713,915,708,890,685,867,676,854,664,862,605,845,595,832,612,800,620,775,620,750,633,700,636,657,663,642,680,620,683,597,677,580,690,560,715,542,746,547,740,517,765,490,797,475,805,455,814,440,813,405,793,328,832,330,838,327,850,334,869,338,875,323,893,304,893,250,875,222,859,209,857,150,860,120,860,97,853,90,840,93,828,80,805,73,790,63,765,78,740,82,680,68,665,82,643,90,625,84,608,69,570,66,549,59,542,80,540,107,520,118,500,113,480,107,455,106,430,97,402,100,380,95,340,93,300,88,275,93,255,91,246,100,241,135,235,148,212,154,200,160,160,163,162,183,150,200,135,221,93,232,88,272,62,322,69,350,67,375,69,405,53,450,57,495,48,496,30,487,15,502,0,511];
const zones = [
  "610,418 617,406 634,418 628,443 624,452 610,452 605,436",
  "560,443 573,438 577,432 587,437 587,454 577,450",
  "549,490 565,478 580,472 581,484 572,495 566,517 552,517",
  "496,462 503,460 502,472 497,474", "490,482 496,476 500,488 498,494 490,488",
  "517,484 524,484 524,492 517,492", "538,522 545,519 547,540 541,542",
  "523,576 538,574 539,584 535,598 526,592",
  "514,614 524,614 531,628 542,644 536,658 528,676 518,682 516,664 523,655 514,636",
  "481,638 496,642 500,662 508,678 519,690 528,708 532,735 528,770 528,794 514,789 502,775 488,770 490,742 470,738 458,728 458,714 472,712 482,700 496,690 484,678",
  "600,588 640,590 678,600 682,606 678,622 658,642 640,648 630,636 608,630 598,608",
  "586,664 598,662 606,672 616,668 616,658 636,662 634,704 622,740 612,758 590,758 590,748 602,740 586,726 584,702 600,684 586,678",
  "494,850 508,852 520,847 540,856 534,864 518,869 508,866",
  "466,913 472,906 490,904 494,910 478,908",
  "652,876 662,874 666,882 676,882 674,892 684,906 684,930 690,944 684,956 670,948 650,948 632,936 634,922 644,896 656,890",
  "580,934 594,936 596,944 588,950", "585,970 591,972 590,978 585,977", "670,962 678,964 676,970 670,968",
  "540,955 550,942 562,948 564,975 570,998 580,1008 586,998 604,1006 610,1020 614,1042 624,1056 624,1072 634,1074 632,1092 638,1108 636,1124 611,1126 603,1106 588,1102 576,1092 572,1100 542,1102 534,1088 538,1072 546,1066 522,1052 524,1020 526,986 538,976",
  "712,922 731,945 733,992 757,1012 755,1112 735,1125 684,1122 684,1104 676,1084 676,1066 664,1046 652,1046 654,1018 644,1012 640,996 638,986 642,968 652,968 654,978 684,984 700,970 708,952",
  "764,452 772,454 778,460 798,462 798,467 764,464", "808,420 813,418 813,440 808,444", "640,186 647,184 647,190 642,192",
  "497,241 503,238 503,241", "607,460 613,460 611,465", "656,548 664,546 664,550", "772,482 782,481 778,485",
];

function MapCanvas() {
  return (
    <main className="min-w-0 flex-1 border border-t-0 border-[#a8a8a8] bg-white">
      <svg viewBox="512 138 866 911" className="h-full w-full" role="img" aria-label="Colombo district boundary with vectorized zones">
        <g transform="translate(1060 290) scale(.33333)" fill="#d046dc" stroke="#5c3a60" strokeWidth="1.500">
          {zones.map((z) => <polygon key={z} points={z} />)}
          <rect x="497" y="688" width="14" height="5" fill="#fff" stroke="#333" strokeWidth="2" />
          <path d="M642 176v6M643 202v7M97 754v8M538 505h3M657 521h3M688 459h3M492 915h3" stroke="#444" strokeWidth="2" />
        </g>
        <g fill="none" stroke="#000" strokeWidth="5.200" strokeLinejoin="round" strokeLinecap="round">
          <g transform="translate(520 290) scale(.33333)">
            <path d={curve(coastNorth)} />
            <path d={curve(coastWest)} />
          </g>
          <g transform="translate(1060 290) scale(.33333)"><path d={curve(east)} /></g>
        </g>
        <g transform="translate(520 600) scale(.42092 .33333)" fill="none">
          <path d={curve(south)} stroke="#000" strokeWidth="1.750" vectorEffect="non-scaling-stroke" strokeLinejoin="round" strokeLinecap="round" />
          <circle cx="342" cy="835" r="3.500" fill="#000" />
        </g>
      </svg>
    </main>
  );
}

/* ---------- styling dock ---------- */
function StylingDock() {
  return (
    <section className="flex w-[542px] shrink-0 flex-col">
      <header className="flex h-[22px] items-center justify-between pr-0.5 pb-0.5 pl-[10px]">
        <h2>Layer Styling</h2>
        <DockButtons />
      </header>
      <div className="flex min-h-0 flex-1 flex-col pr-[3px] pl-[9px]">
        <Combo icon={<PolyIcon light />} text="Vectorized" label="Layer" />
        <div className="mt-[5px] flex min-h-0 flex-1">
          <div className="mb-1 flex w-[38px] shrink-0 flex-col">
            <button type="button" aria-label="Symbology" className="flex h-8 items-center justify-center"><StyleBrushIcon /></button>
            <div className="flex flex-1 flex-col items-center bg-[#5d5d5d] pr-2">
              <button type="button" aria-label="Labels" className="flex h-8 items-center"><I s={22}><g transform="translate(0 2)"><Tag fill="#ffee66" stroke="#c9a100" color="#333" /></g></I></button>
              <button type="button" aria-label="Masks" className="flex h-8 items-center">
                <svg width="24" height="16" viewBox="0 0 24 16" aria-hidden="true"><rect x="1" y="2" width="22" height="12" rx="6" fill="#e6eef8" /><text x="2" y="12" fontSize="10" fontWeight="bold" fontFamily="DejaVu Sans" fill="#333">abc</text></svg>
              </button>
              <button type="button" aria-label="3D view" className="flex h-8 items-center"><I s={22}><path d="M12 1l10 6-10 6L2 7z" fill="#f58a8a" stroke="#c01010" strokeWidth="1.300" /><path d="M2 7l10 6v10L2 17z" fill="#8fd83a" stroke="#4e8a16" /><path d="M22 7l-10 6v10l10-6z" fill="#ffe94a" stroke="#b09000" /></I></button>
              <button type="button" aria-label="Diagrams" className="flex h-8 items-center"><I s={24}><path d="M12 7v11M6 18V8M18 8v10M6 9h12" stroke="#c87820" strokeWidth="2.600" /><rect x="7" y="0" width="10" height="8" fill="#ef5050" stroke="#b02020" /><rect x="1" y="17" width="9" height="6" fill="#ffe04a" stroke="#a08600" /><rect x="14" y="17" width="9" height="6" fill="#8fbcec" stroke="#47709c" /></I></button>
              <button type="button" aria-label="History" className="flex h-8 items-center"><I s={22}><g transform="translate(0 -1) scale(.55)"><path d="M4 20C2 8 12 3 20 6l1-5 8 9-9 7V12c-6-1-9 2-8 8z" fill="#6fb07a" /></g><g transform="translate(8 8) scale(.68)"><path d="M2.500 9.500L10 3v4c7-1 12 2 11.500 8-.4 4-3.500 6.500-8 6.500v-4c2 0 3.500-1 3.500-2.500 0-2-3-3-7-2.500V16z" fill="#e8803c" /></g></I></button>
            </div>
          </div>
          <div className="flex min-w-0 flex-1 flex-col pl-[3px]">
            <Combo
              icon={<svg width="14" height="14" viewBox="0 0 14 14" aria-hidden="true"><path d="M.5.500h11v3h-11z" fill="#18a8e0" stroke="#104890" /><path d="M2.500 5.500h11v3h-11z" fill="#18b868" stroke="#0a5030" /><path d="M.5 10.500h11v3h-11z" fill="#c81818" stroke="#600808" /></svg>}
              text="Categorized"
              label="Renderer"
            />
            <div className="mt-[5px] flex h-[26px] items-center">
              <label htmlFor="value" className="w-[79px] shrink-0">Value</label>
              <div className="flex h-full min-w-0 flex-1 items-center rounded-[3px] border border-[#b0b0b0] bg-white">
                <span className="pr-[5px] pb-0.5 pl-[3px] font-['Liberation_Sans'] text-[9px] font-bold text-[#555]">123</span>
                <input id="value" defaultValue="DN" className="min-w-0 flex-1 bg-transparent outline-none" />
                <button type="button" aria-label="Choose field" className="flex h-full w-5 items-center justify-center border-l border-[#c4c4c4] bg-linear-to-b from-white to-[#ededed]"><Caret /></button>
              </div>
              <button type="button" aria-label="Expression" className={`${btn} ml-1.5 h-full w-6 text-lg text-[#6b3a7a]`}>ε</button>
            </div>
            <div className="mt-[5px] flex h-6 items-center">
              <span className="w-[79px] shrink-0">Symbol</span>
              <button type="button" aria-label="Change symbol" className={`${btn} h-full min-w-0 flex-1 px-1`}>
                <span className="h-[11px] w-full border border-[#5a4a6e] bg-[#987db7]" />
              </button>
              <button type="button" aria-label="Symbol options" className={`${dd12} h-full`}><Caret /></button>
            </div>
            <div className="mt-[6px] flex h-[28px] items-center">
              <span className="w-[79px] shrink-0">Color ramp</span>
              <button type="button" className={`${btn} h-full min-w-0 flex-1`}>Random colors</button>
              <button type="button" aria-label="Color ramp options" className={`${dd12} h-full`}><Caret /></button>
            </div>
            <div className="mt-[5px] min-h-0 flex-1 border border-[#b8b8b8] bg-white">
              <table className="w-full table-fixed border-collapse text-left">
                <colgroup><col className="w-[81px]" /><col className="w-[69px]" /><col /></colgroup>
                <thead>
                  <tr className="h-[21px] border-b border-[#b8b8b8] bg-linear-to-b from-white to-[#ededed]">
                    <th className="border-r border-[#d0d0d0] p-0 pl-0.5 font-normal"><span className="flex items-center justify-between pr-1">Symbol<Caret up /></span></th>
                    <th className="border-r border-[#d0d0d0] p-0 pl-[3px] font-normal">Value</th>
                    <th className="p-0 pl-[3px] font-normal">Legend</th>
                  </tr>
                </thead>
                <tbody>
                  <tr className="h-[18px] leading-4">
                    <td className="p-0 pl-[3px]"><span className="flex items-center gap-1.5"><Check on label="Class 0" /><span className="size-4 border border-[#8a3a92] bg-[#d046dc]" /></span></td>
                    <td className="p-0 pl-1">0</td>
                    <td className="p-0 pl-1">0</td>
                  </tr>
                  <tr className="h-[18px] bg-[#e4f0f7] leading-4 outline outline-[#a9c8dc] -outline-offset-1">
                    <td className="p-0 pl-[3px]"><Check on label="Class 1" /></td>
                    <td className="p-0 pl-1">1</td>
                    <td className="p-0 pl-1">1</td>
                  </tr>
                </tbody>
              </table>
            </div>
            <div className="mt-[6px] flex h-[25px] shrink-0 gap-1.5">
              <button type="button" className={`${btn} w-20`}>Classify</button>
              <button type="button" aria-label="Add class" className={`${btn} w-7`}><svg width="14" height="14" viewBox="0 0 14 14"><path d="M5 .5h4V5h4.500v4H9v4.500H5V9H.5V5H5z" fill="#fff" stroke="#56935a" /><path d="M7 2.500v9M2.500 7h9" stroke="#56935a" strokeWidth="2" /></svg></button>
              <button type="button" aria-label="Remove class" className={`${btn} w-7`}><svg width="15" height="7" viewBox="0 0 15 7"><path d="M.5.500h14v6H.5z" fill="#fff" stroke="#ef4444" /><path d="M2.500 3.500h10" stroke="#ef4444" strokeWidth="2" /></svg></button>
              <button type="button" className={`${btn} w-20`}>Delete All</button>
              <button type="button" className={`${btn} ml-auto w-[85px] gap-1.5`}>Advanced<svg width="6" height="4" viewBox="0 0 8 5"><path d="M0 0h8L4 5z" fill="#5a5a5a" /></svg></button>
            </div>
            <button type="button" className="flex h-[30px] shrink-0 items-center gap-[10px] pt-0.5 pl-[5px] font-bold">
              <svg width="7" height="11" viewBox="0 0 7 11"><path d="M0 0v11l7-5.500z" fill="#333" /></svg>
              Layer Rendering
            </button>
            <div className="flex h-[29px] shrink-0 items-start gap-1.5">
              <button type="button" aria-label="Undo" className={`${btn} mt-px h-[23px] w-6`}><UndoIcon fill="#e8803c" s={15} /></button>
              <button type="button" aria-label="Redo" className={`${btn} mt-px h-[23px] w-6`}><UndoIcon fill="#6fb07a" flip s={15} /></button>
              <div className="ml-auto flex h-[25px] items-center gap-[13px]">
                <Check on><span>Live update</span></Check>
                <button type="button" className={`${btn} h-full w-20`}>
                  <svg width="15" height="16" viewBox="0 0 15 16"><path d="M0 9l3-2 2 3L13 0l2 1L6 15H4z" fill="#66875a" stroke="#3e5c34" strokeWidth=".6" /></svg>
                  Apply
                </button>
              </div>
            </div>
          </div>
        </div>
      </div>
      <nav className="ml-[6px] flex h-[28px] shrink-0 items-start border-t border-[#b0b0b0]">
        <button type="button" className="h-[26px] w-[110px] rounded-b-[3px] border border-t-0 border-[#b0b0b0] bg-[#f7f7f7]">Layer Styling</button>
        <button type="button" className="h-6 w-[150px] border border-t-0 border-l-0 border-[#b0b0b0] bg-[#dcdcdc]">Processing Toolbox</button>
        <button type="button" className="h-6 w-[93px] rounded-b-[3px] border border-t-0 border-l-0 border-[#b0b0b0] bg-[#dcdcdc]">Value Tool</button>
      </nav>
    </section>
  );
}

/* ---------- status bar ---------- */
function Spin({ id, v, w }: { id: string; v: string; w: string }) {
  return (
    <div className={`flex h-[23px] items-center rounded-[3px] border border-[#b0b0b0] bg-white ${w}`}>
      <input id={id} defaultValue={v} className="min-w-0 flex-1 pl-1 outline-none" />
      <div className="flex h-full w-[14px] flex-col items-center justify-center gap-[5px] border-l border-[#c4c4c4] bg-[#f4f4f4]">
        <button type="button" aria-label="Increase" className="flex"><Caret up /></button>
        <button type="button" aria-label="Decrease" className="flex"><Caret /></button>
      </div>
    </div>
  );
}

function StatusBar() {
  return (
    <footer className="flex h-[31px] shrink-0 items-center pr-[7px] pl-1 text-[11px]">
      <div className="flex h-[25px] w-[270px] items-center rounded-[3px] border border-[#b0b0b0] bg-white pr-2 pl-2 text-[13px]">
        <svg width="13" height="13" viewBox="0 0 13 13" fill="none" stroke="#999" strokeWidth="1.400" aria-hidden="true"><circle cx="5" cy="5" r="4" /><path d="M8 8l4.500 4.500" /></svg>
        <input aria-label="Locator" defaultValue="polygonize" className="ml-[7px] min-w-0 flex-1 outline-none" />
        <button type="button" aria-label="Clear">
          <svg width="13" height="10" viewBox="0 0 13 10"><path d="M0 5l4-5h9v10H4z" fill="#999" /><path d="M5.500 2.500l5 5M10.500 2.500l-5 5" stroke="#fff" strokeWidth="1.300" /></svg>
        </button>
      </div>
      <div className="ml-auto flex items-center pt-0.5">
        <label htmlFor="coord">Coordinate</label>
        <input id="coord" defaultValue="439071,484009" className="ml-[3px] h-[22px] w-[104px] rounded-[3px] border border-[#b0b0b0] bg-white text-center outline-none" />
        <button type="button" aria-label="Toggle extents" className="ml-1 flex">
          <I s={16}><path d="M5 2l14 20M3 6l12 16" stroke="#111" strokeWidth="2.500" /><path d="M4 3c4-3 8 0 8 4s-5 6-8 3-2-5 0-7zM12 12c4-2 8 0 8 4s-5 6-8 3-2-5 0-7z" stroke="#222" strokeWidth="2.500" fill="#aaa" /><path d="M16 8l6-6" stroke="#444" strokeWidth="1.500" /></I>
        </button>
        <label htmlFor="scale" className="ml-[14px]">Scale</label>
        <div className="ml-[3px] flex h-6 w-[97px] items-center rounded-[3px] border border-[#b0b0b0] bg-white">
          <input id="scale" defaultValue="1:194478" className="min-w-0 flex-1 pl-[3px] outline-none" />
          <button type="button" aria-label="Choose scale" className="flex h-full w-5 items-center justify-center border-l border-[#c4c4c4] bg-[#f6f6f6]"><Caret /></button>
        </div>
        <svg width="12" height="15" viewBox="0 0 12 15" className="ml-3" aria-label="Lock scale"><path d="M2.500 7V4.500a3.500 3.500 0 0 1 7 0V7" fill="none" stroke="#888" strokeWidth="1.500" /><rect x="0" y="6.500" width="12" height="8.500" rx="1" fill="#5d5d5d" /></svg>
        <label htmlFor="mag" className="ml-[9px]">Magnifier</label>
        <div className="ml-[3px]"><Spin id="mag" v="100%" w="w-[98px]" /></div>
        <label htmlFor="rot" className="ml-[10px]">Rotation</label>
        <div className="ml-[9px]"><Spin id="rot" v="0.0 °" w="w-[94px]" /></div>
        <div className="ml-[6px]"><Check on><span>Render</span></Check></div>
        <button type="button" className="ml-4 flex items-center gap-[3px]">
          <I s={15}><Globe fill="#777" line="#eee" edge="#666" /></I>
          EPSG:5235
        </button>
        <button type="button" aria-label="Messages" className="ml-6">
          <svg width="16" height="15" viewBox="0 0 16 15"><path d="M8 0c5 0 8 2.500 8 6 0 2-1 4-2 5l1 4-4-2.500c-6 1-11-2-11-6.500C0 2.500 3 0 8 0z" fill="#666" /><path d="M3.500 6h2M7 6h2M10.500 6h2" stroke="#fff" strokeWidth="2" /></svg>
        </button>
      </div>
    </footer>
  );
}

const menu: [string, string, string][] = [
  ["Pro", "j", "ect"], ["", "E", "dit"], ["", "V", "iew"], ["", "L", "ayer"], ["", "S", "ettings"], ["", "P", "lugins"],
  ["Vect", "o", "r"], ["", "R", "aster"], ["", "D", "atabase"], ["", "W", "eb"], ["", "M", "esh"], ["Pro", "c", "essing"], ["", "H", "elp"],
];

export default function App() {
  return (
    <div className="flex h-screen w-full flex-col overflow-hidden border border-[#999] bg-[#efefef] font-['DejaVu_Sans',sans-serif] text-[13px] text-[#111]">
      <header className="grid h-[37px] shrink-0 grid-cols-[1fr_auto_1fr] items-center border-b border-[#222] bg-[#353535] text-white">
        <h1 className="col-start-2 font-['Open_Sans',sans-serif] text-[13px] font-semibold text-[#f2f2f2]">*fb-d4g-module9-lka — QGIS</h1>
        <div className="flex items-center justify-end pr-[9px]">
          <button type="button" aria-label="Minimize" className="mt-1.5 h-0.5 w-2 bg-white" />
          <button type="button" aria-label="Maximize" className="ml-[27px] size-[6px] border-2 border-white" />
          <button type="button" aria-label="Close" className="ml-[21px] flex size-[19px] items-center justify-center rounded-full bg-[#f68b28]">
            <svg width="8" height="8" viewBox="0 0 8 8" stroke="#fff" strokeWidth="2"><path d="M.5.500l7 7M7.500.500l-7 7" /></svg>
          </button>
        </div>
      </header>
      <nav className="flex h-[22px] shrink-0 items-center gap-[15px] border-b border-[#d0d0d0] pl-[10px]">
        {menu.map(([a, b, c]) => (
          <button key={a + b + c} type="button">{a}<u className="underline-offset-2">{b}</u>{c}</button>
        ))}
      </nav>
      <Bar>
        <Handle first />
        <TB n="New project"><PageIcon /></TB>
        <TB n="Open"><FolderIcon /></TB>
        <TB n="Save"><SaveIcon /></TB>
        <TB n="New layout"><LayoutNewIcon /></TB>
        <TB n="Layout manager"><LayoutMgrIcon /></TB>
        <TB n="Style manager"><StyleMgrIcon /></TB>
        <Handle />
        <TB n="Pan" on><HandIcon /></TB>
        <TB n="Pan to selection"><PanSelIcon /></TB>
        <TB n="Zoom in"><ZoomInIcon /></TB>
        <TB n="Zoom out"><ZoomOutIcon /></TB>
        <TB n="Zoom full"><ZoomFullIcon /></TB>
        <TB n="Zoom to selection" dim><ZoomSelIcon /></TB>
        <TB n="Zoom to layer"><ZoomLayerIcon /></TB>
        <TB n="Zoom native" dim><ZoomNativeIcon /></TB>
        <TB n="Zoom last"><ZoomLastIcon /></TB>
        <TB n="Zoom next" dim><ZoomLastIcon next /></TB>
        <TB n="New map view"><NewMapIcon /></TB>
        <TB n="New 3D view"><New3dIcon /></TB>
        <TB n="New bookmark"><BookmarkNewIcon /></TB>
        <TB n="Bookmarks"><BookmarksIcon /></TB>
        <TB n="Temporal controller"><ClockIcon /></TB>
        <TB n="Refresh"><RefreshIcon /></TB>
        <Handle />
        <TB n="Identify"><IdentifyIcon /></TB>
        <TB n="Attribute table"><TableIcon /></TB>
        <TB n="Field calculator"><AbacusIcon /></TB>
        <TB n="Toolbox"><GearIcon /></TB>
        <TB n="Statistics"><SigmaIcon /></TB>
        <TB n="Measure" dd><MeasureIcon /></TB>
        <TB n="Map tips"><TipIcon /></TB>
        <TB n="Run action" dd dim><ActionIcon /></TB>
        <TB n="Text annotation" dd><TextIcon /></TB>
        <Handle />
        <TB n="Select features" dd><SelectIcon /></TB>
        <TB n="Select by value" dd><DeselectIcon /></TB>
        <TB n="Deselect" dd><DeselectAllIcon /></TB>
        <TB n="Select by location"><SelectLocIcon /></TB>
      </Bar>
      <Bar>
        <Handle first />
        <TB n="Current edits" dim><PencilsIcon /></TB>
        <TB n="Toggle editing"><PencilIcon /></TB>
        <TB n="Save edits" dim><SaveEditsIcon /></TB>
        <TB n="Add polygon" dim><AddPolyIcon /></TB>
        <TB n="Vertex tool" dd dim><VertexIcon /></TB>
        <TB n="Modify attributes" dim><ModifyIcon /></TB>
        <TB n="Delete" dim><TrashIcon /></TB>
        <TB n="Cut" dim><CutIcon /></TB>
        <TB n="Copy" dim><CopyIcon /></TB>
        <TB n="Paste" dim><PasteIcon /></TB>
        <TB n="Undo" dim><UndoIcon /></TB>
        <TB n="Redo" dim><UndoIcon flip /></TB>
        <Handle />
        <TB n="Labeling"><LabelIcon /></TB>
        <TB n="Diagrams"><DiagramIcon /></TB>
        <Sep />
        <TB n="Pinned labels"><PinLabelIcon /></TB>
        <TB n="Unplaced labels"><RedLabelIcon /></TB>
        <Sep />
        <TB n="Pin label" dim><DimLabelIcon kind="pin" /></TB>
        <TB n="Show label" dim><DimLabelIcon kind="eye" /></TB>
        <TB n="Move label" dim><DimLabelIcon kind="move" /></TB>
        <TB n="Rotate label" dim><DimLabelIcon kind="rotate" /></TB>
        <TB n="Edit label" dim><DimLabelIcon kind="edit" /></TB>
        <Handle />
        <TB n="MetaSearch"><MetaSearchIcon /></TB>
        <Handle />
        <TB n="Python console"><PythonIcon /></TB>
        <TB n="Earth view"><EarthIcon /></TB>
        <TB n="Value tool"><IdentifyIcon fill="#128a1c" /></TB>
        <TB n="Map swipe"><SwipeIcon /></TB>
        <Handle />
        <TB n="Help"><HelpIcon /></TB>
        <Handle />
        <TB n="Topology checker"><TopologyIcon /></TB>
        <TB n="Table sync"><TableSyncIcon /></TB>
        <Handle />
        <TB n="Search places"><GreenSearchIcon /></TB>
        <TB n="Edit map"><ColorMapIcon /></TB>
        <Handle />
      </Bar>
      <div className="flex min-h-0 flex-1">
        <aside className="flex w-[51px] shrink-0 flex-col border-r border-[#b8b8b8] bg-linear-to-r from-[#fafafa] to-[#ececec]">
          <HHandle />
          <SideB n="Data source manager"><LayersAddIcon /></SideB>
          <SideB n="New GeoPackage"><I><BoxGlobe /><NewBadge /></I></SideB>
          <SideB n="New shapefile"><I><Vee /><NewBadge /></I></SideB>
          <SideB n="New SpatiaLite"><I><Feather /><NewBadge /></I></SideB>
          <SideB n="New scratch layer"><ChipNewIcon /></SideB>
          <HSep />
          <SideB n="New virtual layer"><BoxedVee badge={<NewBadge />} /></SideB>
          <HSep />
          <div className="pt-[3px]"><HHandle /></div>
          <SideB n="Add vector" wide><I><Vee /><PlusBadge /></I></SideB>
          <SideB n="Add raster" wide><Checker /></SideB>
          <SideB n="Add mesh" wide><MeshAddIcon /></SideB>
          <SideB n="Add delimited text" wide><CommaIcon /></SideB>
          <SideB n="Add SpatiaLite" wide><I><Feather /><PlusBadge /></I></SideB>
          <SideB n="Add virtual layer" wide><BoxedVee badge={<PlusBadge />} /></SideB>
          <SideB n="Add PostGIS" wide dd><ElephantIcon /></SideB>
          <SideB n="Add WMS" wide><GlobeAddIcon k={0} /></SideB>
          <SideB n="Add WCS" wide><GlobeAddIcon k={1} /></SideB>
          <SideB n="Add WFS" wide><GlobeAddIcon k={2} /></SideB>
          <SideB n="New package" wide dd><I><BoxGlobe /><NewBadge /></I></SideB>
        </aside>
        <LayersDock />
        <MapCanvas />
        <StylingDock />
      </div>
      <StatusBar />
    </div>
  );
}
